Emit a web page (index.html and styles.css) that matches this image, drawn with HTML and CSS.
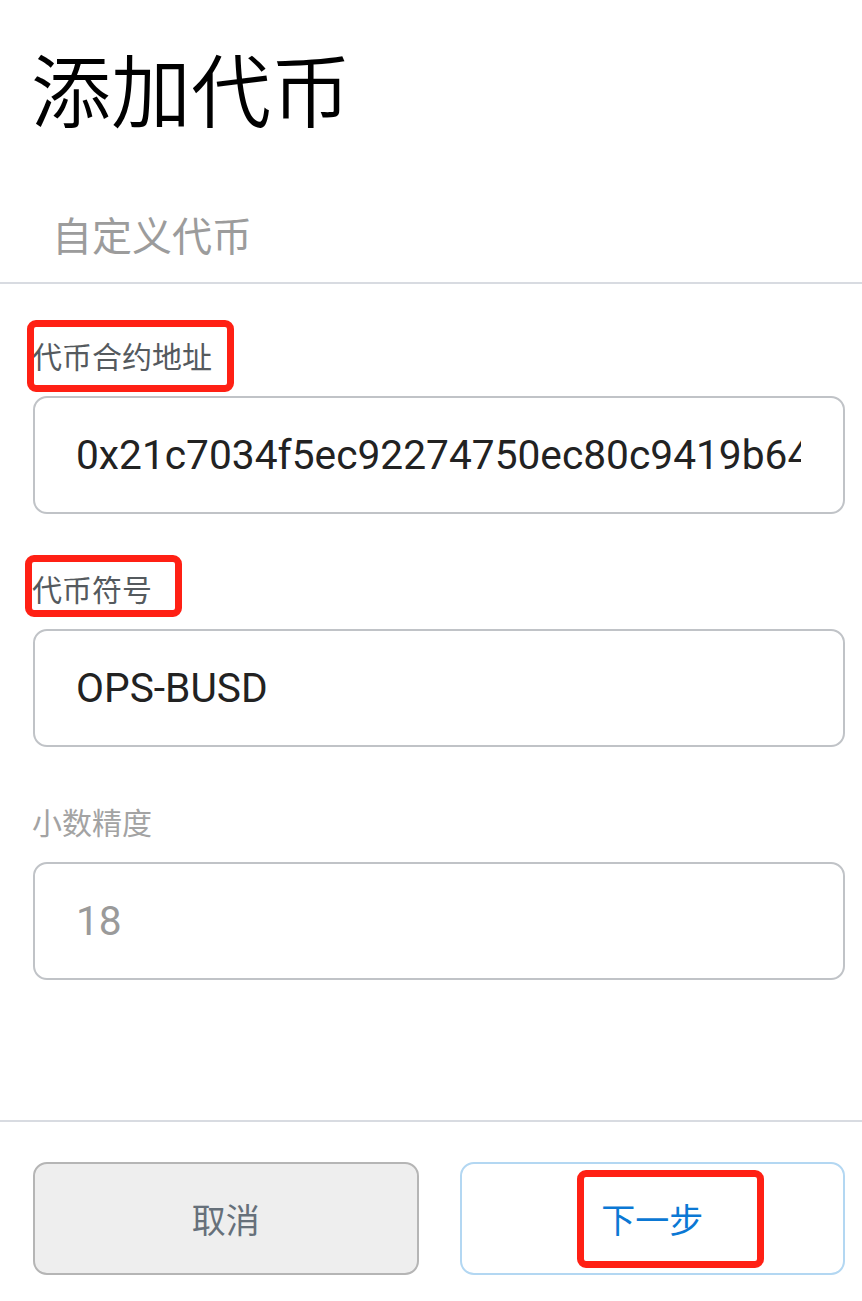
FILE: index.html
```html
<!DOCTYPE html>
<html lang="zh">
<head>
<meta charset="utf-8">
<title>添加代币</title>
<link rel="stylesheet" href="styles.css">
</head>
<body>
<div class="page">
  <header class="header">
    <h1 class="title">添加代币</h1>
    <div class="tab">自定义代币</div>
  </header>
  <main class="form">
    <div class="field">
      <label class="label"><span class="label-text">代币合约地址</span><span class="mark mark-1"></span></label>
      <input class="input" type="text" value="0x21c7034f5ec92274750ec80c9419b64a3ba6ee3">
    </div>
    <div class="field">
      <label class="label"><span class="label-text">代币符号</span><span class="mark mark-2"></span></label>
      <input class="input" type="text" value="OPS-BUSD">
    </div>
    <div class="field">
      <label class="label label-muted"><span class="label-text">小数精度</span></label>
      <input class="input input-muted" type="text" value="18" readonly>
    </div>
  </main>
  <footer class="footer">
    <button class="btn btn-cancel">取消</button>
    <button class="btn btn-next">下一步<span class="mark mark-3"></span></button>
  </footer>
</div>
</body>
</html>
```

FILE: styles.css
```css
* { box-sizing: border-box; }
html, body { margin: 0; padding: 0; background: #fff; }
body {
  font-family: "Roboto", "Noto Sans CJK SC", sans-serif;
  width: 862px;
  height: 1301px;
  overflow: hidden;
}
.page { display: flex; flex-direction: column; height: 1301px; }
.header {
  padding-top: 46px;
  border-bottom: 2px solid #d8dbe1;
}
.title {
  margin: 0 0 0 31px;
  font-family: "Noto Sans CJK SC", sans-serif;
  font-size: 80px;
  font-weight: 350;
  line-height: 80px;
  color: #000;
}
.tab {
  margin: 88px 0 0 52px;
  padding-bottom: 28px;
  font-family: "Noto Sans CJK SC", sans-serif;
  font-size: 40px;
  line-height: 40px;
  color: #9c9c9c;
}
.form {
  display: flex;
  flex-direction: column;
  gap: 59px;
  padding: 56px 17px 0 33px;
  flex: 1;
}
.field { display: flex; flex-direction: column; gap: 26px; }
.label {
  position: relative;
  align-self: flex-start;
  margin-left: -1px;
  font-family: "Noto Sans CJK SC", sans-serif;
  font-size: 30px;
  line-height: 30px;
  color: #555a5e;
}
.label-muted { color: #a3a3a3; }
.input {
  display: block;
  width: 100%;
  height: 118px;
  border: 2px solid #c0c3c7;
  border-radius: 14px;
  padding: 0 42px 0 41px;
  font-family: "Roboto", sans-serif;
  font-size: 40.7px;
  color: #222;
  background: #fff;
  outline: none;
}
.input-muted { color: #9a9a9a; }
.footer {
  border-top: 2px solid #d8dbe1;
  margin-bottom: 26px;
  padding: 40px 17px 0 33px;
  display: flex;
  gap: 41px;
}
.btn {
  position: relative;
  flex: 1;
  height: 113px;
  border-radius: 14px;
  font-family: "Noto Sans CJK SC", sans-serif;
  font-size: 34px;
  cursor: pointer;
}
.btn-cancel {
  background: #eeeeee;
  border: 2px solid #b5b5b5;
  color: #66707a;
}
.btn-next {
  background: #fff;
  border: 2px solid #b3d7f2;
  color: #0b78d4;
}
.mark {
  position: absolute;
  border: 7px solid #ff2014;
  border-radius: 9px;
  pointer-events: none;
}
.mark-1 { left: -5px; top: -20px; width: 207px; height: 72px; }
.mark-2 { left: -7px; top: -18px; width: 157px; height: 62px; }
.mark-3 { left: 115px; top: 6px; width: 187px; height: 98px; }
```
